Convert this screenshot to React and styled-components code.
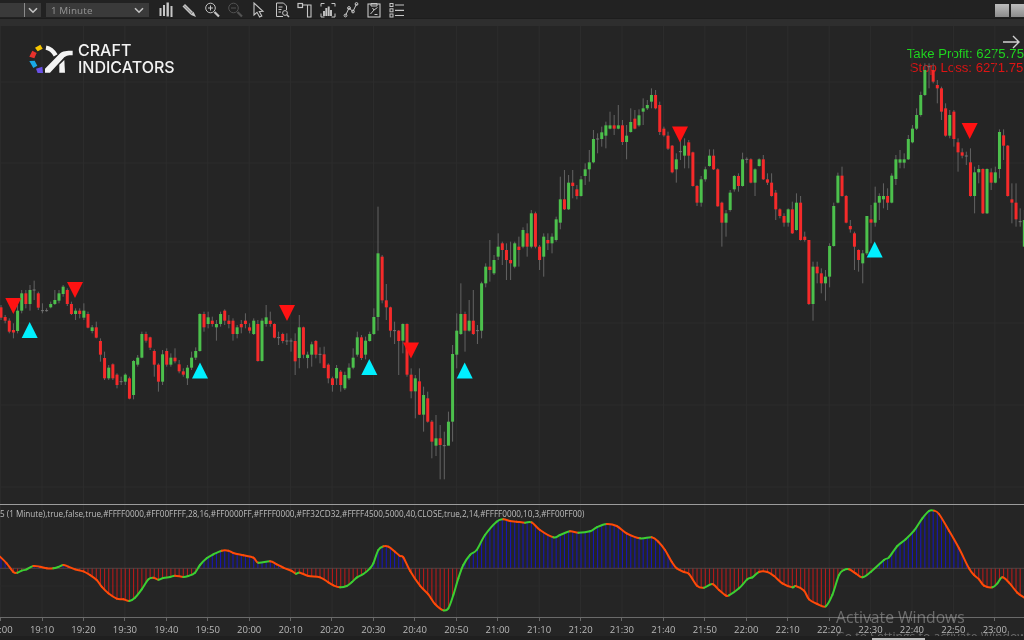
import React from "react";
import styled, { createGlobalStyle } from "styled-components";

const STEP = 4.143;
const candleX = (i) => 1 + i * STEP;

// [kind, bodyTop, bodyBottom, wickTop, wickBottom] in zoom pixels, kind: g / r / d
const SEG_A = [
["r",112,143,105,150],["r",141,152,135,160],["r",152,185,145,190],["r",180,185,160,205],["g",122,183,105,190],["g",70,122,60,130],["r",70,102,60,115],["g",60,102,45,122],["d",60,60,32,90],["r",70,113,65,120],
["d",122,122,100,130],["d",122,122,115,125],["g",102,112,95,115],["g",90,102,60,105],["g",70,92,60,100],["g",50,72,45,80],["r",60,102,55,108],["r",102,132,95,135],["g",122,132,115,150],["r",122,132,115,145],
["g",122,143,100,150],["r",132,173,125,175],["g",172,183,165,190],["r",172,203,155,205],["r",213,254,205,275],["r",264,325,245,330],["g",293,325,285,330],["r",283,325,280,330],["r",314,345,310,355],["d",335,335,320,345],
["g",314,335,310,345],["r",325,386,320,388],["g",273,375,270,388],["g",263,284,255,290],["g",192,263,185,265],["r",192,212,185,218],["r",202,233,200,240],["r",243,284,238,320],["r",284,335,280,365],["g",253,335,240,345],
["r",243,284,235,290],["g",263,284,250,290],["r",263,274,235,280],["r",283,304,270,310],["r",304,314,295,320],["g",293,325,285,345],["g",263,293,245,300],["g",243,263,232,270],["g",132,243,130,245],["r",132,172,125,185],
["g",142,162,125,175],["r",152,162,140,170],["g",162,172,150,212],["g",132,162,125,170],["r",122,152,118,165],["r",152,162,135,175],["r",152,192,145,212],["g",172,192,165,205],["r",162,172,150,190],["r",152,162,130,175],
["r",172,182,160,190],["g",152,192,145,195],["r",162,273,150,275],["g",152,273,145,275],["g",142,162,105,170],["r",152,162,125,170],["r",162,203,160,205],["d",203,203,185,225],["r",192,213,188,220],["d",213,213,190,225],
["d",213,213,205,245],["r",213,274,190,315],["g",172,264,135,295],["r",172,254,170,265],["g",254,264,245,295],["g",223,254,215,290],["r",213,254,210,265],["d",253,253,232,280],["r",253,294,230,295],["r",284,325,280,340],
["r",325,345,320,365],["g",294,325,285,345],
];
const SEG_B = [
["r",515,555,510,575],["g",525,565,515,570],["g",503,535,490,540],["g",473,503,445,508],["g",412,464,395,470],["r",412,474,405,480],["g",422,464,410,478],["g",402,423,395,425],["g",351,402,325,405],["g",160,351,20,392],
["r",170,301,165,310],["r",301,322,252,360],["r",322,392,320,412],["d",392,392,365,432],["r",392,423,390,525],["g",372,422,370,460],["r",372,524,370,530],["r",524,574,505,595],["g",535,574,525,655],["r",544,644,505,645],
["g",585,644,560,695],["r",595,665,575,668],["r",665,725,660,775],["g",715,737,645,768],["r",715,735,675,838],["d",737,737,695,838],["g",665,737,635,725],["g",462,665,435,725],["g",392,464,340,505],["g",342,402,250,405],
["r",342,392,335,455],["g",362,392,300,395],["r",362,402,270,405],["d",392,392,375,432],["g",250,392,245,415],["g",200,250,190,262],["r",200,210,120,245],["g",180,220,165,225],["g",140,170,100,180],["r",130,150,125,195],
["r",150,180,130,240],["r",180,190,125,240],["g",130,200,125,205],["r",140,150,110,200],["g",90,140,82,145],["r",100,140,70,170],["g",40,140,30,145],["r",40,140,35,145],["r",140,180,135,210],["g",110,170,100,230],
["r",120,130,100,150],["g",110,130,100,160],["g",58,120,50,125],
];
const SEG_C = [
["g",388,458,320,478],["r",388,418,300,420],["g",338,418,315,420],["r",338,348,300,385],["r",358,378,345,388],["g",328,378,318,380],["g",298,318,280,345],["g",277,298,240,335],["g",207,277,180,280],["d",207,207,190,250],
["g",187,207,170,230],["g",166,197,155,235],["g",166,176,125,178],["r",166,176,135,195],["g",166,176,105,178],["r",166,216,150,225],["g",197,216,165,268],["g",156,186,115,188],["r",146,176,120,178],["g",136,166,118,170],
["g",115,125,85,165],["g",105,115,90,120],["g",75,95,55,115],["r",75,115,60,118],["r",105,186,95,195],["r",176,196,170,200],["r",197,236,185,240],["r",227,307,225,310],["g",268,298,250,338],["d",245,245,205,270],
["g",227,257,205,295],["r",217,257,210,295],["r",247,348,245,350],["r",348,398,345,408],["g",328,398,318,410],["g",298,328,290,335],["g",257,288,238,290],["r",257,298,238,300],["r",298,409,295,410],["r",398,458,395,530],
["g",430,458,420,500],["g",368,420,360,425],["g",318,358,315,365],["r",318,348,310,365],["g",268,348,248,350],["d",268,268,262,280],["r",268,338,265,340],["g",298,338,295,378],["g",268,288,265,290],["r",268,328,255,330],
["r",328,338,310,345],["r",338,378,310,380],["r",368,418,360,450],["r",418,438,415,445],["r",438,458,430,470],["g",418,458,415,470],["r",418,490,395,492],["g",398,480,370,482],["r",398,510,378,512],["r",500,510,485,515],
["r",510,702,510,705],["g",590,702,575,752],["r",590,610,575,640],["r",610,640,595,670],["g",620,640,600,692],["g",528,620,520,652],["g",408,528,398,530],["g",317,398,308,400],["r",317,378,290,380],["r",378,458,375,460],
["r",468,478,450,488],["r",490,530,485,600],["r",540,570,538,605],["g",550,580,540,640],["g",438,550,438,555],["r",448,458,405,520],["g",398,458,350,470],["g",378,398,370,450],["g",378,388,340,415],["r",378,398,355,420],
["g",317,398,310,400],["g",268,327,255,345],["g",268,278,240,295],["g",268,278,250,295],["g",207,268,195,270],["g",176,217,165,220],["g",135,176,115,180],["g",75,135,65,140],["g",0,75,-20,78],["d",-10,-10,-20,55],
["r",0,35,-20,40],["r",45,55,30,100],["r",55,125,50,150],["r",115,197,100,200],["g",135,197,120,205],["r",125,207,120,230],["r",217,247,205,305],["r",247,257,235,265],["d",258,258,245,285],["r",277,378,235,380],
["g",307,378,290,430],["g",297,307,285,340],["r",297,430,295,432],["g",297,430,295,432],["r",307,338,295,360],["g",307,338,290,340],["g",186,297,178,325],["r",196,227,178,270],["r",227,378,225,380],["r",388,398,340,460],
["r",398,448,340,470],["d",455,455,415,470],["g",450,530,420,530],
];

const scaleRows = (rows, y0) =>
  rows.map(([kind, top, bottom, wickTop, wickBottom]) => ({
    kind,
    top: y0 + top / 3,
    bottom: y0 + bottom / 3,
    wickTop: y0 + wickTop / 3,
    wickBottom: y0 + wickBottom / 3,
  }));

const CANDLES = [...scaleRows(SEG_A, 270), ...scaleRows(SEG_B, 200), ...scaleRows(SEG_C, 70)];

const WAVE_RAW = [
  [0, [[0,170],[20,190],[40,216],[52,218],[65,212],[80,208],[100,198],[120,200],[140,205],[160,205],[175,201],[190,195],[205,200],[225,208],[250,214],[270,225],[290,240],[305,260],[325,280],[350,296],[370,298],[388,303],[405,293],[425,268],[445,238],[460,233],[475,239],[490,234],[510,231],[525,227],[550,231],[565,228],[585,218],[600,195],[620,175],[640,163],[665,152],[685,152],[700,159],[730,166],[760,173],[775,188],[810,184],[830,193],[850,203],[875,213],[888,221],[900,218],[925,228],[960,232],[985,247],[1000,256]]],
  [340, [[0,262],[20,258],[35,247],[50,233],[70,222],[90,205],[100,190],[115,150],[130,139],[145,140],[165,155],[180,168],[190,172],[210,212],[240,257],[265,283],[285,312],[310,331],[325,325],[340,285],[355,235],[370,195],[390,165],[410,150],[435,105],[470,65],[490,58],[510,63],[530,65],[555,68],[575,67],[600,90],[640,112],[660,105],[690,94],[715,98],[750,94],[770,82],[800,72],[830,78],[860,100],[900,115],[935,112],[955,125],[975,150],[995,185],[1010,205]]],
  [684, [[0,216],[15,222],[40,258],[60,263],[85,252],[105,270],[125,286],[135,286],[165,265],[190,238],[205,232],[225,216],[250,216],[270,228],[295,250],[325,262],[335,258],[360,272],[375,298],[400,312],[425,319],[445,285],[465,225],[480,210],[495,208],[515,220],[535,232],[560,216],[600,180],[615,172],[640,138],[665,118],[690,92],[715,55],[735,33],[750,32],[765,42],[795,92],[825,145],[855,205],[870,225],[885,238],[900,257],[925,262],[940,250],[955,232],[975,248],[1000,278],[1020,292]]],
];
const WAVE = WAVE_RAW.flatMap(([x0, pts]) => pts.map(([x, y]) => [x0 + x / 3, 500 + y / 3]));
const ZERO_Y = 568.3;

const waveYAt = (x) => {
  for (let i = 0; i < WAVE.length - 1; i++) {
    const [x1, y1] = WAVE[i];
    const [x2, y2] = WAVE[i + 1];
    if (x >= x1 && x <= x2) return y1 + ((y2 - y1) * (x - x1)) / (x2 - x1);
  }
  return ZERO_Y;
};

const waveSegments = WAVE.slice(0, -1).map((p1, i) => {
  const p0 = WAVE[i - 1] || p1;
  const p2 = WAVE[i + 1];
  const p3 = WAVE[i + 2] || p2;
  const c1 = [p1[0] + (p2[0] - p0[0]) / 6, p1[1] + (p2[1] - p0[1]) / 6];
  const c2 = [p2[0] - (p3[0] - p1[0]) / 6, p2[1] - (p3[1] - p1[1]) / 6];
  return {
    d: `M${p1[0]} ${p1[1]}C${c1[0]} ${c1[1]} ${c2[0]} ${c2[1]} ${p2[0]} ${p2[1]}`,
    rising: p2[1] < p1[1],
  };
});

const MARKERS = [
  { up: false, x: 13.3, y: 298 }, { up: false, x: 75, y: 282 }, { up: false, x: 287, y: 305 },
  { up: false, x: 411, y: 342.5 }, { up: false, x: 680, y: 126.5 }, { up: false, x: 969.7, y: 123 },
  { up: true, x: 29.7, y: 322 }, { up: true, x: 200, y: 362.5 }, { up: true, x: 369.3, y: 359 },
  { up: true, x: 464.7, y: 362.5 }, { up: true, x: 874.7, y: 241.5 },
];

const GRID_X = Array.from({ length: 25 }, (_, i) => 0.6 + i * 41.43);
const GRID_Y = [82, 163, 242, 323, 405, 487];
const TIMES = ["19:00","19:10","19:20","19:30","19:40","19:50","20:00","20:10","20:20","20:30","20:40","20:50","21:00","21:10","21:20","21:30","21:40","21:50","22:00","22:10","22:20","22:30","22:40","22:50","23:00"];

const GlobalStyle = createGlobalStyle`
  html, body { margin: 0; padding: 0; background: #252525; }
  body { width: 1024px; height: 640px; overflow: hidden; font-family: "Open Sans", "Liberation Sans", sans-serif; }
`;

const Page = styled.div`
  position: relative;
  width: 1024px;
  height: 640px;
  display: flex;
  flex-direction: column;
  background: #252525;
  overflow: hidden;
  filter: blur(0.35px);
`;

const Toolbar = styled.div`
  height: 16px;
  padding-top: 2px;
  display: flex;
  align-items: center;
  background: #222222;
  flex: none;
`;

const ToolbarStrip = styled.div`
  height: 8px;
  flex: none;
  background: #2e2e2e;
  border-top: 1px solid #1d1d1d;
  box-sizing: border-box;
`;

const Combo = styled.div`
  height: 14px;
  width: ${(p) => p.$width}px;
  margin-right: ${(p) => p.$gap}px;
  display: flex;
  align-items: center;
  background: #3a3a3a;
  box-sizing: border-box;
  flex: none;
`;

const ComboText = styled.span`
  flex: 1;
  padding-left: 5px;
  font: 400 9.8px "Noto Sans", sans-serif;
  letter-spacing: 0.1px;
  color: #8f8f8f;
  white-space: nowrap;
`;

const ComboChevron = styled.span`
  width: ${(p) => p.$width}px;
  height: 14px;
  display: flex;
  align-items: center;
  justify-content: center;
  border-left: ${(p) => (p.$divided ? "1px solid #8a8a8a" : "none")};
  box-sizing: border-box;
  flex: none;
`;

const IconRow = styled.div`
  display: flex;
  align-items: center;
  margin-left: 5px;
`;

const IconSlot = styled.span`
  width: 23.2px;
  height: 16px;
  display: flex;
  align-items: center;
  justify-content: center;
  color: ${(p) => (p.$dim ? "#525252" : "#c6c6c6")};
`;

const WindowButtons = styled.div`
  margin-left: auto;
  display: flex;
  gap: 2px;
  margin-right: -1px;
`;

const WindowButton = styled.span`
  width: 14px;
  height: 13px;
  background: linear-gradient(#bdbdbd, #8c8c8c);
`;

const ChartPane = styled.div`
  position: relative;
  height: 478px;
  flex: none;
`;

const Canvas = styled.svg`
  position: relative;
  display: block;
  width: 1024px;
  height: ${(p) => p.$height}px;
`;

const Logo = styled.div`
  position: absolute;
  left: 29px;
  top: 16px;
  display: flex;
  align-items: flex-start;
  gap: 4px;
`;

const LogoGlyph = styled.svg`
  margin-top: 2px;
  flex: none;
`;

const LogoText = styled.div`
  font: 500 16px/17px "Inter", "Liberation Sans", sans-serif;
  color: #f2f2f2;
`;

const Readout = styled.div`
  position: absolute;
  right: 0;
  top: 21px;
  font: 400 13.2px/13.5px "Liberation Sans", Arial, sans-serif;
  white-space: nowrap;
`;

const ReadoutLine = styled.div`
  color: ${(p) => p.$color};
  margin-left: ${(p) => p.$indent}px;
`;

const ArrowMark = styled.svg`
  position: absolute;
  left: 1002px;
  top: 9px;
  width: 18px;
  height: 14px;
`;

const Divider = styled.div`
  height: 1px;
  flex: none;
  background: ${(p) => p.$color};
`;

const IndicatorPane = styled.div`
  position: relative;
  height: 112px;
  flex: none;
`;

const Legend = styled.div`
  position: absolute;
  left: 0;
  top: 2px;
  font: 400 8.17px/13px "Open Sans", sans-serif;
  color: #bdbdbd;
  white-space: nowrap;
`;

const TimeAxis = styled.div`
  height: 18px;
  flex: none;
  display: flex;
  margin-left: -20.1px;
  background: #252525;
`;

const TimeCell = styled.div`
  width: 41.43px;
  flex: none;
  display: flex;
  flex-direction: column;
  align-items: center;
  font: 400 9.5px/12px "Open Sans", sans-serif;
  color: #b8b8b8;
`;

const TimeTick = styled.span`
  width: 1px;
  height: 3px;
  background: #666666;
  margin-bottom: 3px;
`;

const BottomStrip = styled.div`
  position: relative;
  z-index: 3;
  height: 4px;
  flex: none;
  background: #1f1f1f;
  display: flex;
  padding-left: 872px;
`;

const ScrollThumb = styled.span`
  width: 53px;
  height: 3px;
  margin-top: 2px;
  background: #bdbdbd;
`;

const Watermark = styled.div`
  position: absolute;
  z-index: 2;
  left: 836px;
  top: 608px;
  color: rgba(205, 205, 205, 0.42);
  font-family: "Open Sans", sans-serif;
  white-space: nowrap;
  pointer-events: none;
`;

const WatermarkTitle = styled.div`
  font-size: 15.7px;
  line-height: 19px;
`;

const WatermarkHint = styled.div`
  font-size: 12.2px;
  line-height: 16px;
  margin-top: 2px;
`;

const Chevron = () => (
  <svg width="10" height="7" viewBox="0 0 10 7" fill="none" stroke="#c4c4c4" strokeWidth="1.6">
    <path d="M1 1.2 5 5.2 9 1.2" />
  </svg>
);

const Glyph = ({ children }) => (
  <svg width="16" height="16" viewBox="0 0 16 16" fill="none" stroke="currentColor" strokeWidth="1">
    {children}
  </svg>
);

const ICONS = [
  { name: "bars", draw: <><rect x="1.5" y="6" width="2" height="8" fill="currentColor" stroke="none" /><rect x="5" y="3" width="2" height="11" fill="currentColor" stroke="none" /><rect x="8.5" y="0.5" width="2.4" height="14" fill="currentColor" stroke="none" /><rect x="12.5" y="4" width="2" height="11" fill="currentColor" stroke="none" /></> },
  { name: "pencil", draw: <><path d="M1.5 4.5 4 2l8 8-2.5 2.5Z" fill="currentColor" stroke="none" /><path d="M3 3.5 11 11.5" stroke="#555555" strokeWidth="0.7" /><path d="M9.5 12.8 15 15 12.5 9.7Z" fill="currentColor" stroke="none" /></> },
  { name: "zoomIn", draw: <><circle cx="6.5" cy="6" r="4.8" /><path d="M4 6h5M6.5 3.5v5" /><path d="M10.5 10 15 14.5" strokeWidth="2.2" /></> },
  { name: "zoomOut", dim: true, draw: <><circle cx="6.5" cy="6" r="4.8" /><path d="M4 6h5" /><path d="M10.5 10 15 14.5" strokeWidth="2.2" /></> },
  { name: "cursor", draw: <path d="M4 1 4 13 7 10.3 9.6 15 11.8 14 9.3 9.5 13 9.3Z" strokeWidth="1.1" /> },
  { name: "report", draw: <><path d="M2.5 1h7l3 3v4M2.5 1v13.5H9" /><path d="M4.5 5h4M4.5 7.5h3M4.5 10h2.5" /><circle cx="11" cy="11" r="2.4" /><path d="M12.8 12.8 15 15" strokeWidth="1.4" /></> },
  { name: "dataBox", draw: <><rect x="1" y="1.5" width="4.5" height="4" strokeWidth="1.2" /><path d="M5.5 3h8.5v12h-3.5V3" strokeWidth="1.1" /></> },
  { name: "focus", draw: <><path d="M1 4.5V1.5h3.5M11.5 1.5H15v3M15 11.5V15h-3.5M4.5 15H1v-3.5" /><path d="M4 14V9M6.3 14V6M8.7 14V4.5M11 14V8" strokeWidth="1.9" /></> },
  { name: "nodes", draw: <><path d="M2.5 13.5 6 6l4 3.5 3.5-7.5" /><circle cx="2.5" cy="13.5" r="1.4" /><circle cx="6" cy="6" r="1.4" /><circle cx="10" cy="9.5" r="1.4" /><circle cx="13.5" cy="2" r="1.4" /></> },
  { name: "clipboard", draw: <><rect x="2" y="2" width="12" height="13" strokeWidth="1.1" /><path d="M5 1.5h6v2.5H5z" /><path d="M4.5 12 8 8l-1.5-2M8 8l3.5-2.5M8.5 12.5h3" /></> },
  { name: "list", draw: <><rect x="1" y="1.5" width="3" height="3" /><rect x="1" y="6.8" width="3" height="3" /><rect x="1" y="12" width="3" height="3" /><path d="M6 3h9M6 8.3h9M6 13.5h9" strokeWidth="1.2" /></> },
];

const LogoMark = () => (
  <LogoGlyph width="45" height="30" viewBox="27 18 135 90">
    <path d="M45 29 61 20 68 32 53 40Z" fill="#f7c600" />
    <path d="M28 56 37 38 50 45 43 61Z" fill="#e8322c" />
    <path d="M28 69 44 68 52 83 40 90Z" fill="#19a9e6" />
    <path d="M48 92 67 86 69 105 53 105Z" fill="#6a52e8" />
    <path d="M78 29C90 31 100 40 107 52" fill="none" stroke="#f4f4f4" strokeWidth="13" />
    <path d="M75 92 119 47C128 38 140 38 158 38V52C143 52 137 53 130 61L90 104H75Z" fill="#f4f4f4" />
    <path d="M118 80 133 66 135 104H118Z" fill="#f4f4f4" />
  </LogoGlyph>
);

const PriceChart = () => (
  <Canvas $height={478} viewBox="0 26 1024 478">
    {GRID_X.map((x) => <line key={x} x1={x} x2={x} y1="26" y2="504" stroke="#2d2d2d" />)}
    {GRID_Y.map((y) => <line key={y} x1="0" x2="1024" y1={y} y2={y} stroke="#2d2d2d" />)}
    {CANDLES.map((c, i) => {
      const x = candleX(i);
      return (
        <g key={i}>
          <line x1={x} x2={x} y1={c.wickTop} y2={c.wickBottom} stroke="#636363" />
          {c.kind === "d" ? (
            <line x1={x - 1.5} x2={x + 1.5} y1={c.top} y2={c.top} stroke="#777777" />
          ) : (
            <rect x={x - 1.5} y={c.top} width="3" height={Math.max(c.bottom - c.top, 2.5)} fill={c.kind === "g" ? "#4cc04c" : "#f52a2a"} />
          )}
        </g>
      );
    })}
    {MARKERS.map((m, i) => (
      <path
        key={i}
        d={m.up ? `M${m.x} ${m.y}l8 16h-16z` : `M${m.x - 8} ${m.y}h16l-8 16z`}
        fill={m.up ? "#00f0ff" : "#ff1212"}
      />
    ))}
  </Canvas>
);

const OscillatorChart = () => (
  <Canvas $height={112} viewBox="0 505 1024 112">
    {GRID_X.map((x) => <line key={x} x1={x} x2={x} y1="505" y2="617" stroke="#2d2d2d" />)}
    <line x1="0" x2="1024" y1="586" y2="586" stroke="#2b2b2b" />
    {CANDLES.map((_, i) => {
      const x = candleX(i);
      const y = waveYAt(x);
      return (
        <line
          key={i}
          x1={x}
          x2={x}
          y1={ZERO_Y}
          y2={y}
          stroke={y < ZERO_Y ? "#1616b4" : "#b51a1a"}
          strokeWidth="1.1"
        />
      );
    })}
    <line x1="0" x2="1024" y1={ZERO_Y} y2={ZERO_Y} stroke="#5a4a4a" strokeWidth="0.8" />
    {waveSegments.map((s, i) => (
      <path key={i} d={s.d} fill="none" stroke={s.rising ? "#3ccf32" : "#ff4a08"} strokeWidth="2" strokeLinecap="round" />
    ))}
  </Canvas>
);

export default function App() {
  return (
    <Page>
      <GlobalStyle />
      <Toolbar>
        <Combo $width={41} $gap={5}>
          <ComboText />
          <ComboChevron $width={17} $divided><Chevron /></ComboChevron>
        </Combo>
        <Combo $width={103} $gap={0}>
          <ComboText>1 Minute</ComboText>
          <ComboChevron $width={20}><Chevron /></ComboChevron>
        </Combo>
        <IconRow>
          {ICONS.map((icon) => (
            <IconSlot key={icon.name} $dim={icon.dim}><Glyph>{icon.draw}</Glyph></IconSlot>
          ))}
        </IconRow>
        <WindowButtons>
          <WindowButton />
          <WindowButton />
        </WindowButtons>
      </Toolbar>
      <ToolbarStrip />
      <ChartPane>
        <Readout>
          <ReadoutLine $color="#1fd41f" $indent={0}>Take Profit: 6275.75</ReadoutLine>
          <ReadoutLine $color="#dd1414" $indent={3}>Stop Loss: 6271.75</ReadoutLine>
        </Readout>
        <PriceChart />
        <Logo>
          <LogoMark />
          <LogoText>CRAFT<br />INDICATORS</LogoText>
        </Logo>
        <ArrowMark viewBox="0 0 18 14" fill="none" stroke="#cfcfcf" strokeWidth="1.4">
          <path d="M1 7H17M11 1 17 7 11 13" />
        </ArrowMark>
      </ChartPane>
      <Divider $color="#9c9c9c" />
      <IndicatorPane>
        <OscillatorChart />
        <Legend>5 (1 Minute),true,false,true,#FFFF0000,#FF00FFFF,28,16,#FF0000FF,#FFFF0000,#FF32CD32,#FFFF4500,5000,40,CLOSE,true,2,14,#FFFF0000,10,3,#FF00FF00)</Legend>
      </IndicatorPane>
      <Divider $color="#6a6a6a" />
      <TimeAxis>
        {TIMES.map((t) => (
          <TimeCell key={t}><TimeTick />{t}</TimeCell>
        ))}
      </TimeAxis>
      <BottomStrip><ScrollThumb /></BottomStrip>
      <Watermark>
        <WatermarkTitle>Activate Windows</WatermarkTitle>
        <WatermarkHint>Go to Settings to activate Windows.</WatermarkHint>
      </Watermark>
    </Page>
  );
}
